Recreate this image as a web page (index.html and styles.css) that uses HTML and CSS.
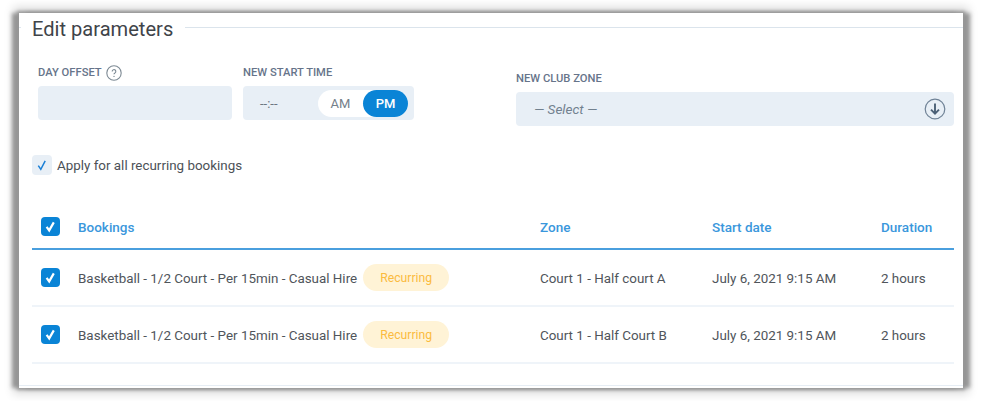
FILE: index.html
```html
<!DOCTYPE html>
<html lang="en">
<head>
<meta charset="utf-8">
<title>Edit parameters</title>
<link rel="stylesheet" href="styles.css">
</head>
<body>
<main class="panel">
  <header class="legend">
    <span class="legend-tick"></span>
    <h1>Edit parameters</h1>
    <span class="legend-rule"></span>
  </header>

  <section class="fields">
    <div class="field field-offset">
      <label class="label label-help">DAY OFFSET
        <svg class="help" viewBox="0 0 16 16" width="16" height="16"><circle cx="8" cy="8" r="7.2" fill="none" stroke="#7d8a94" stroke-width="1.1"/><path d="M6.2 6.4a1.8 1.8 0 1 1 2.8 1.5c-.7.4-1 .7-1 1.4" fill="none" stroke="#7d8a94" stroke-width="1.1"/><circle cx="8" cy="11.4" r=".7" fill="#7d8a94"/></svg>
      </label>
      <div class="input"></div>
    </div>
    <div class="field field-time">
      <label class="label">NEW START TIME</label>
      <div class="input time">
        <span class="time-value">--:--</span>
        <div class="ampm"><span class="am">AM</span><span class="pm">PM</span></div>
      </div>
    </div>
    <div class="field field-zone">
      <label class="label">NEW CLUB ZONE</label>
      <div class="input select">
        <span class="select-value">— Select —</span>
        <svg viewBox="0 0 22 22" width="22" height="22"><circle cx="11" cy="11" r="9.8" fill="none" stroke="#6f8296" stroke-width="1.2"/><path d="M11 5.5v10M7 11.6l4 4 4-4" fill="none" stroke="#4b6076" stroke-width="1.9"/></svg>
      </div>
    </div>
  </section>

  <div class="apply">
    <span class="soft-check"><svg viewBox="0 0 20 20" width="20" height="20"><path d="M6.3 10.6l2.5 3.7 4.4-8.4" fill="none" stroke="#1a7fd6" stroke-width="1.5"/></svg></span>
    <span>Apply for all recurring bookings</span>
  </div>

  <section class="table">
    <div class="row head">
      <span class="check"><svg viewBox="0 0 19 19" width="19" height="19"><path d="M5.6 9.8l2.6 3.6 4.6-8" fill="none" stroke="#fff" stroke-width="2.2"/></svg></span>
      <span>Bookings</span><span>Zone</span><span>Start date</span><span>Duration</span>
    </div>
    <div class="row">
      <span class="check"><svg viewBox="0 0 19 19" width="19" height="19"><path d="M5.6 9.8l2.6 3.6 4.6-8" fill="none" stroke="#fff" stroke-width="2.2"/></svg></span>
      <span class="booking">Basketball - 1/2 Court - Per 15min - Casual Hire <em class="badge">Recurring</em></span>
      <span>Court 1 - Half court A</span><span>July 6, 2021 9:15 AM</span><span>2 hours</span>
    </div>
    <div class="row">
      <span class="check"><svg viewBox="0 0 19 19" width="19" height="19"><path d="M5.6 9.8l2.6 3.6 4.6-8" fill="none" stroke="#fff" stroke-width="2.2"/></svg></span>
      <span class="booking">Basketball - 1/2 Court - Per 15min - Casual Hire <em class="badge">Recurring</em></span>
      <span>Court 1 - Half Court B</span><span>July 6, 2021 9:15 AM</span><span>2 hours</span>
    </div>
  </section>
  <div class="panel-end"></div>
</main>
</body>
</html>
```

FILE: styles.css
```css
* { box-sizing: border-box; }
html, body { margin: 0; height: 401px; overflow: hidden; background: #fff; }
body { padding: 13px 20px 13px 19px; font-family: Roboto, "Liberation Sans", sans-serif; color: #4a4f55; }

.panel {
  width: 944px;
  height: 375px;
  background: #fff;
  box-shadow: -7px 0 4px #969696, 7px 0 4px #969696, 0 0 3px 2px #a4a4a4, 0 0 9px 6px #dcdcdc;
  display: flex;
  flex-direction: column;
  padding-right: 9px;
}

.legend { display: flex; align-items: center; height: 32px; margin-right: -9px; }
.legend-tick { width: 2px; height: 1px; background: #dfe7ef; margin: -3px 11px 0 0; }
.legend h1 { margin: 0; font-size: 20.1px; font-weight: 400; line-height: 32px; color: #3f4449; }
.legend-rule { flex: 1; height: 1px; background: #dbe4ec; margin: -4px 0 0 12px; }

.fields { display: flex; padding-left: 19px; margin-top: 19px; align-items: flex-start; }
.field { display: flex; flex-direction: column; }
.field-offset { width: 194px; margin-right: 11px; }
.field-time { width: 171px; margin-right: 102px; }
.field-zone { flex: 1; margin-top: 6px; }

.label {
  font-size: 11.2px;
  font-weight: 500;
  line-height: 16px;
  height: 22px;
  padding-top: 1px;
  color: #66748a;
  display: flex;
  align-items: flex-start;
  gap: 4px;
}
.help { margin: 0; }

.input { height: 34px; background: #e8eff6; border-radius: 4px; }
.time { display: flex; align-items: center; justify-content: space-between; padding: 0 6px 0 17px; }
.time-value { font-size: 13px; color: #6b7680; }
.ampm { display: flex; width: 90px; height: 27px; background: #fff; border-radius: 14px; font-size: 13px; }
.ampm span { display: flex; align-items: center; justify-content: center; border-radius: 14px; }
.am { flex: 1; color: #75808a; }
.pm { width: 45px; background: #0a84d6; color: #fff; font-weight: 500; }

.select { display: flex; align-items: center; justify-content: space-between; padding: 0 8px 0 18px; }
.select-value { font-size: 13.5px; font-style: italic; color: #72818f; }

.apply { display: flex; align-items: center; gap: 5px; margin: 29px 0 0 13px; font-size: 13.4px; color: #4c5157; }
.soft-check { width: 20px; height: 20px; background: #e8eff6; border-radius: 4px; display: block; }
.soft-check svg { display: block; }

.table { margin: 30px 0 0 13px; }
.row {
  display: grid;
  grid-template-columns: 46px 462px 172px 169px 1fr;
  align-items: center;
  height: 57px;
  border-bottom: 2px solid #eff4f9;
  font-size: 13.4px;
  color: #50555b;
}
.row > span + span { padding-top: 2px; }
.head {
  height: 45px;
  border-bottom: 2px solid #4a9fde;
  font-size: 13.5px;
  font-weight: 500;
  color: #3a97dc;
}
.head > span + span { padding-top: 0; }
.check { width: 19px; height: 19px; margin-left: 9px; background: #0a84d6; border-radius: 4px; display: block; }
.check svg { display: block; }
.booking { display: flex; align-items: center; gap: 6px; white-space: nowrap; }
.badge {
  font-style: normal;
  font-size: 12.2px;
  color: #fbbb3f;
  background: #fff3d6;
  height: 27px;
  width: 86px;
  border-radius: 14px;
  display: flex;
  align-items: center;
  justify-content: center;
  margin-top: -2px;
}
.panel-end { margin: auto -9px 2px 0; height: 1px; background: #e6edf4; }
```
